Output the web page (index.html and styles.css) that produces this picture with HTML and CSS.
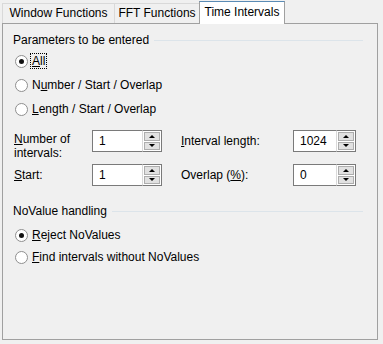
FILE: index.html
```html
<!DOCTYPE html>
<html lang="en">
<head>
    <meta charset="UTF-8">
    <title>Time Intervals</title>
    <link rel="stylesheet" href="styles.css">
</head>
<body>
    <div class="tabs">
        <div class="tab">Window Functions</div>
        <div class="tab">FFT Functions</div>
        <div class="tab active">Time Intervals</div>
    </div>
    <div class="panel">
        <div class="group-title">Parameters to be entered</div>
        <div class="radios">
            <label class="radio"><span class="dot checked"></span><span class="focus"><u>A</u>ll</span></label>
            <label class="radio"><span class="dot"></span><span>N<u>u</u>mber / Start / Overlap</span></label>
            <label class="radio"><span class="dot"></span><span><u>L</u>ength / Start / Overlap</span></label>
        </div>
        <div class="fields">
            <div class="label two-line"><u>N</u>umber of<br>intervals:</div>
            <div class="spin">
                <div class="spin-input">1</div>
                <div class="spin-btns"><span class="up"></span><span class="down"></span></div>
            </div>
            <div class="label"><u>I</u>nterval length:</div>
            <div class="spin">
                <div class="spin-input">1024</div>
                <div class="spin-btns"><span class="up"></span><span class="down"></span></div>
            </div>
            <div class="label"><u>S</u>tart:</div>
            <div class="spin">
                <div class="spin-input">1</div>
                <div class="spin-btns"><span class="up"></span><span class="down"></span></div>
            </div>
            <div class="label">Overlap (<u>%</u>):</div>
            <div class="spin">
                <div class="spin-input">0</div>
                <div class="spin-btns"><span class="up"></span><span class="down"></span></div>
            </div>
        </div>
        <div class="group-title second">NoValue handling</div>
        <div class="radios small">
            <label class="radio"><span class="dot checked"></span><span><u>R</u>eject NoValues</span></label>
            <label class="radio"><span class="dot"></span><span><u>F</u>ind intervals without NoValues</span></label>
        </div>
    </div>
</body>
</html>
```

FILE: styles.css
```css
body {
    margin: 0;
    background-color: #f0f0f0;
    font-family: "Liberation Sans", Arial, sans-serif;
    font-size: 12px;
    color: #000;
}

.tabs {
    display: flex;
    align-items: flex-end;
    height: 23px;
    padding-left: 2px;
}

.tab {
    box-sizing: border-box;
    height: 20px;
    line-height: 19px;
    text-align: center;
    white-space: nowrap;
    border: 1px solid #d9d9d9;
    border-bottom: none;
    border-right: none;
}

.tab:first-child {
    width: 112px;
}

.tab:nth-child(2) {
    width: 85px;
}

.tab.active {
    width: 86px;
    height: 23px;
    line-height: 20px;
    background-color: #fff;
    border: 1px solid #a0a0a0;
    border-top-color: #5a8bb5;
    border-bottom: none;
    position: relative;
    top: 1px;
}

.panel {
    box-sizing: border-box;
    width: 376px;
    height: 317px;
    margin-left: 2px;
    border: 1px solid #a0a0a0;
    padding: 8px 14px 0 10px;
}

.group-title {
    display: flex;
    align-items: center;
    height: 16px;
    line-height: 16px;
}

.group-title::after {
    content: "";
    flex: 1;
    height: 1px;
    margin-left: 5px;
    background-color: #dce4ea;
}

.group-title.second {
    margin-top: 17px;
}

.radios {
    margin-top: 1px;
}

.radio {
    display: flex;
    align-items: center;
    height: 24px;
    padding-left: 2px;
}

.radios.small {
    margin-top: 5px;
}

.radios.small .radio {
    height: 22px;
}

.dot {
    width: 11px;
    height: 11px;
    border: 1px solid #8f8f8f;
    border-radius: 50%;
    background-color: #fff;
    margin-right: 4px;
    display: flex;
    align-items: center;
    justify-content: center;
}

.dot.checked::after {
    content: "";
    width: 5px;
    height: 5px;
    border-radius: 50%;
    background-color: #111;
}

.focus {
    outline: 1px dotted #000;
    padding: 0 1px;
    margin-left: -1px;
}

.fields {
    display: grid;
    grid-template-columns: 79px 70px 131px 63px;
    grid-template-rows: 22px 22px;
    row-gap: 12px;
    margin-top: 9px;
}

.fields .label {
    display: flex;
    align-items: center;
    padding-left: 1px;
    white-space: nowrap;
}

.fields .label:nth-child(3),
.fields .label:nth-child(7) {
    padding-left: 19px;
}

.fields .two-line {
    display: block;
    line-height: 14px;
    padding-top: 2px;
}

.spin {
    display: flex;
    height: 22px;
}

.spin-input {
    flex: 1;
    background-color: #fff;
    border: 1px solid #7a7a7a;
    border-right: none;
    padding-left: 6px;
    line-height: 20px;
}

.spin-btns {
    width: 16px;
    display: flex;
    flex-direction: column;
    gap: 1px;
    padding: 1px;
    border: 1px solid #7a7a7a;
    border-left: 1px solid #d9d9d9;
    background-color: #fff;
}

.spin-btns span {
    flex: 1;
    background-color: #e1e1e1;
    border: 1px solid #adadad;
    display: flex;
    align-items: center;
    justify-content: center;
}

.spin-btns .up::after {
    content: "";
    border-left: 3px solid transparent;
    border-right: 3px solid transparent;
    border-bottom: 3px solid #000;
}

.spin-btns .down::after {
    content: "";
    border-left: 3px solid transparent;
    border-right: 3px solid transparent;
    border-top: 3px solid #000;
}
```
